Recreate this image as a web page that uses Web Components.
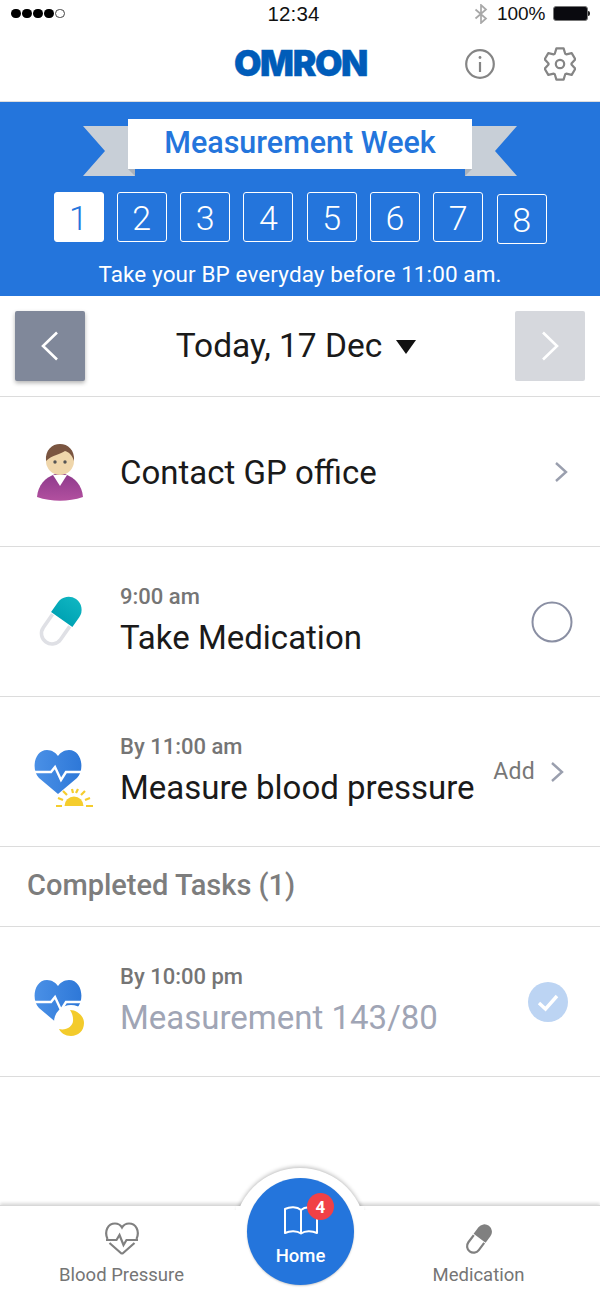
<!DOCTYPE html>
<html lang="en">
<head>
<meta charset="utf-8">
<title>Omron</title>
<style>
    html, body { margin: 0; padding: 0; background: #fff; }
    body {
        width: 600px;
        height: 1299px;
        display: flex;
        flex-direction: column;
        overflow: hidden;
        font-family: Roboto, "Liberation Sans", sans-serif;
    }
    .i { display: block; overflow: visible; }
</style>
</head>
<body>
<status-bar></status-bar>
<app-header></app-header>
<week-banner></week-banner>
<date-nav></date-nav>

<task-row align="single">
    <svg slot="icon" class="i" width="60" height="60" viewBox="0 0 60 60">
        <defs><linearGradient id="shirt" x1="0" y1="0" x2="0" y2="1"><stop offset="0" stop-color="#8e3a8c"/><stop offset="1" stop-color="#b2509f"/></linearGradient></defs>
        <path d="M7 55 C8 43 15 36 25 32 L35 32 C45 36 52 43 53 55 C38 60 22 60 7 55 Z" fill="url(#shirt)"/>
        <path d="M23 33 L37 33 L30 44 Z" fill="#fff"/>
        <circle cx="30" cy="19" r="14" fill="#efd6ab"/>
        <path d="M16 19 C15 8 22 2 30 2 C38 2 45 8 44 19 C42 13 39 10 35 9 C31 12 22 13 16 19 Z" fill="#7a5540"/>
        <circle cx="25" cy="20" r="1.7" fill="#555"/>
        <circle cx="35" cy="20" r="1.7" fill="#555"/>
    </svg>
    <span slot="title">Contact GP office</span>
    <svg slot="end" class="i" width="14" height="22" viewBox="0 0 14 22" style="margin-right:32px"><path d="M2 2 L12 11 L2 20" fill="none" stroke="#9a9fae" stroke-width="2.4"/></svg>
</task-row>

<task-row>
    <svg slot="icon" class="i" width="60" height="60" viewBox="0 0 60 60">
        <defs><linearGradient id="cap" x1="0" y1="0" x2="0" y2="1"><stop offset="0" stop-color="#0fb5c1"/><stop offset="1" stop-color="#00a3b4"/></linearGradient></defs>
        <g transform="rotate(35 30 30)">
            <path d="M19.5 28 V44 a10.5 10.5 0 0 0 21 0 V28" fill="#fff" stroke="#dfe0e5" stroke-width="3.6"/>
            <path d="M17 27 V15 a13 13 0 0 1 26 0 V27 Z" fill="url(#cap)"/>
        </g>
    </svg>
    <span slot="sub">9:00 am</span>
    <span slot="title">Take Medication</span>
    <svg slot="end" class="i" width="42" height="42" viewBox="0 0 42 42" style="margin-right:27px"><circle cx="21" cy="21" r="19.5" fill="none" stroke="#8a8fa3" stroke-width="2"/></svg>
</task-row>

<task-row>
    <svg slot="icon" class="i" width="60" height="60" viewBox="0 0 60 60">
        <defs><linearGradient id="h1" x1="0" y1="0" x2="1" y2="0"><stop offset="0" stop-color="#4a90e6"/><stop offset="1" stop-color="#2e78d8"/></linearGradient></defs>
        <path d="M28 52 L9 36 C1 28 4 8 17 8 C22 8 26 11 28 14 C30 11 34 8 39 8 C52 8 55 28 47 36 Z" fill="url(#h1)"/>
        <path d="M4 30 H21 L25 25 L31 38 L36 30 H52" fill="none" stroke="#fff" stroke-width="2.4"/>
        <circle cx="44" cy="62" r="16" fill="#fff"/>
        <path d="M34.500 64 a9.500 9.500 0 0 1 19 0 Z" fill="#f5cd2d"/>
        <path d="M26 64 H32 M56 64 H63 M28 56 L33 58 M55 58 L60 56 M33 49 L37 53 M51 53 L55 49 M42 47 L43 51 M46 51 L48 47" stroke="#f5cd2d" stroke-width="2.2" fill="none"/>
    </svg>
    <span slot="sub">By 11:00 am</span>
    <span slot="title">Measure blood pressure</span>
    <span slot="end" class="add" style="display:flex;align-items:center;gap:15px;margin-right:36px;margin-left:-4px;font-size:23px;color:#777;letter-spacing:.3px">Add<svg class="i" width="14" height="22" viewBox="0 0 14 22"><path d="M2 2 L12 11 L2 20" fill="none" stroke="#9a9fae" stroke-width="2.4"/></svg></span>
</task-row>

<section-title>Completed Tasks (1)</section-title>

<task-row done>
    <svg slot="icon" class="i" width="60" height="60" viewBox="0 0 60 60">
        <defs><linearGradient id="h2" x1="0" y1="0" x2="1" y2="0"><stop offset="0" stop-color="#4a90e6"/><stop offset="1" stop-color="#2e78d8"/></linearGradient></defs>
        <path d="M28 52 L9 36 C1 28 4 8 17 8 C22 8 26 11 28 14 C30 11 34 8 39 8 C52 8 55 28 47 36 Z" fill="url(#h2)"/>
        <path d="M4 30 H21 L25 25 L31 38 L36 30 H52" fill="none" stroke="#fff" stroke-width="2.4"/>
        <circle cx="41" cy="50" r="17" fill="#fff"/>
        <path d="M40 38 C47 38 54 44 54 51 C54 59 48 64 41 64 C35 64 31 61 29 57 C36 59 44 54 43 47 C43 44 42 41 40 38 Z" fill="#f3cb2b"/>
    </svg>
    <span slot="sub">By 10:00 pm</span>
    <span slot="title">Measurement 143/80</span>
    <svg slot="end" class="i" width="40" height="40" viewBox="0 0 40 40" style="margin-right:32px"><circle cx="20" cy="20" r="20" fill="#bcd4f3"/><path d="M11 21 L17.500 27 L29 14" fill="none" stroke="#fff" stroke-width="3.4"/></svg>
</task-row>

<tab-bar badge="4"></tab-bar>

<script>
const status_bar = document.createElement('template');
status_bar.innerHTML = `
    <style>
        :host{display:flex;align-items:center;height:27px;padding:0 10px 0 11px;margin-bottom:0;font-family:"Liberation Sans",sans-serif;color:#111;position:relative}
        .dots{display:flex;gap:1.5px;width:200px}
        .dots b{width:9.5px;height:9.5px;border-radius:50%;background:#000;box-sizing:border-box}
        .dots b.off{background:#fff;border:1px solid #444}
        .time{flex:1;text-align:center;font-size:20.5px;letter-spacing:.1px;margin-left:-14px}
        .right{width:200px;display:flex;justify-content:flex-end;align-items:center;font-size:19px;gap:9px}
        .batt{display:flex;align-items:center}
        .batt i{display:block;width:35px;height:15px;box-sizing:border-box;background:#0a0a0f;border:1px solid #777;border-radius:3px}
        .batt u{display:block;width:2.500px;height:5px;background:#222;border-radius:0 2px 2px 0}
    </style>
    <div class="dots"><b></b><b></b><b></b><b></b><b class="off"></b></div>
    <div class="time">12:34</div>
    <div class="right">
        <svg width="14" height="20" viewBox="0 0 14 20"><path d="M1.500 5.500 L12 14.500 L7 19 V1 L12 5.500 L1.500 14.500" fill="none" stroke="#a8a8a8" stroke-width="1.700"/></svg>
        <span>100%</span>
        <div class="batt" style="margin-left:-2px"><i></i><u></u></div>
    </div>
`;
class StatusBar extends HTMLElement {
    constructor() {
        super();
        this.attachShadow({ mode: 'open' });
        this.shadowRoot.appendChild(status_bar.content.cloneNode(true));
    }
}

// cog outline: six flat teeth, one of them straight up
function gearPath(cx, cy, ro, ri) {
    let d = '';
    for (let n = 0; n < 6; n++) {
        const a = n * 60 - 90;
        [[ri, a - 27], [ro, a - 13], [ro, a + 13], [ri, a + 27]].forEach((p, k) => {
            const x = cx + p[0] * Math.cos(p[1] * Math.PI / 180);
            const y = cy + p[0] * Math.sin(p[1] * Math.PI / 180);
            d += (n == 0 && k == 0 ? 'M' : 'L') + x.toFixed(2) + ' ' + y.toFixed(2) + ' ';
        });
    }
    return d + 'Z';
}

const app_header = document.createElement('template');
app_header.innerHTML = `
    <style>
        :host{display:block;height:75px;border-bottom:1.5px solid #ddd;box-sizing:border-box;position:relative}
        .bar{display:grid;grid-template-columns:465px 30px 49px 32px;align-items:center;height:100%;padding-bottom:1px;box-sizing:border-box}
        .logo{justify-self:center;transform:translateX(68px);font:900 35.5px Inter,sans-serif;letter-spacing:-1.4px;color:#005cb9;-webkit-text-stroke:.4px #005cb9}
        svg{display:block;grid-row:1}
        .info{grid-column:2}
        .gear{grid-column:4}
    </style>
    <div class="bar">
        <div class="logo">OMRON</div>
        <svg class="info" width="30" height="30" viewBox="0 0 30 30" fill="none" stroke="#858585" stroke-width="2.200">
            <circle cx="15" cy="15" r="13.800"/>
            <path d="M15 13 V23"/>
            <circle cx="15" cy="8.500" r="1.400" fill="#858585" stroke="none"/>
        </svg>
        <svg class="gear" width="32" height="34" viewBox="0 0 32 34" fill="none" stroke="#858585" stroke-width="2.200" stroke-linejoin="round">
            <path id="cog"/>
            <circle cx="16" cy="17" r="4.200"/>
        </svg>
    </div>
`;
class AppHeader extends HTMLElement {
    constructor() {
        super();
        this.attachShadow({ mode: 'open' });
        this.shadowRoot.appendChild(app_header.content.cloneNode(true));
        this.shadowRoot.querySelector('#cog').setAttribute('d', gearPath(16, 17, 16, 11.5));
    }
}

const week_banner = document.createElement('template');
week_banner.innerHTML = `
    <style>
        :host{display:block;height:194px;background:#2475dc;color:#fff;padding-top:17px;box-sizing:border-box;position:relative}
        .ribbon{position:relative;width:344px;height:50px;margin:0 auto;background:#fff;color:#2475dc;display:flex;align-items:center;justify-content:center;font-size:30.5px;font-weight:500;padding-bottom:3px;box-sizing:border-box}
        .tail{position:absolute;top:7px}
        .tail.l{left:-45px}
        .tail.r{right:-45px;transform:scaleX(-1)}
        .weeks{display:flex;gap:13.300px;padding:23px 0 0 53.500px}
        .week{width:50px;height:50px;box-sizing:border-box;border:1.800px solid #fff;border-radius:3px;display:flex;align-items:center;justify-content:center;font-size:34px;font-weight:300;padding-top:2px}
        .week.on{background:#fff;color:#2475dc}
        .week.last{margin-top:2px}
        .tip{text-align:center;font-size:22.5px;margin-top:15px;line-height:30px;letter-spacing:.1px}
    </style>
    <div class="ribbon">
        <svg class="tail l" width="52" height="50" viewBox="0 0 52 50"><path d="M0 0 H45 V43 H52 V50 H0 L22 25 Z" fill="#c8cfd7"/><path d="M45 43 H52 V50 Z" fill="#aab2bc"/></svg>
        <svg class="tail r" width="52" height="50" viewBox="0 0 52 50"><path d="M0 0 H45 V43 H52 V50 H0 L22 25 Z" fill="#c8cfd7"/><path d="M45 43 H52 V50 Z" fill="#aab2bc"/></svg>
        Measurement Week
    </div>
    <div class="weeks"></div>
    <div class="tip">Take your BP everyday before 11:00 am.</div>
`;
class WeekBanner extends HTMLElement {
    constructor() {
        super();
        this.attachShadow({ mode: 'open' });
        this.shadowRoot.appendChild(week_banner.content.cloneNode(true));
        const weeks = this.shadowRoot.querySelector('.weeks');
        for (let n = 1; n <= 8; n++) {
            const el = document.createElement('div');
            el.className = 'week' + (n == 1 ? ' on' : '') + (n == 8 ? ' last' : '');
            el.textContent = n;
            weeks.appendChild(el);
        }
    }
}

const date_nav = document.createElement('template');
date_nav.innerHTML = `
    <style>
        :host{display:flex;align-items:center;justify-content:space-between;height:101px;padding:0 15px 1px;box-sizing:border-box;border-bottom:1.500px solid #dcdcdc}
        .btn{width:70px;height:70px;border-radius:2px;display:flex;align-items:center;justify-content:center}
        .prev{background:#80889a;box-shadow:0 2px 4px rgba(0,0,0,.3)}
        .next{background:#d6d8dd}
        .date{display:flex;align-items:center;gap:14px;font-size:33.5px;color:#1a1a1a;padding-right:8px}
        .tri{width:0;height:0;border-left:10.500px solid transparent;border-right:10.500px solid transparent;border-top:14px solid #111;margin-top:3px}
    </style>
    <div class="btn prev"><svg width="20" height="30" viewBox="0 0 20 30"><path d="M17 1.500 L3 15 L17 28.500" fill="none" stroke="#fff" stroke-width="2.600"/></svg></div>
    <div class="date"><span>Today, 17 Dec</span><i class="tri"></i></div>
    <div class="btn next"><svg width="20" height="30" viewBox="0 0 20 30"><path d="M3 1.500 L17 15 L3 28.500" fill="none" stroke="#fff" stroke-width="2.600"/></svg></div>
`;
class DateNav extends HTMLElement {
    constructor() {
        super();
        this.attachShadow({ mode: 'open' });
        this.shadowRoot.appendChild(date_nav.content.cloneNode(true));
    }
}

const task_row = document.createElement('template');
task_row.innerHTML = `
    <style>
        :host{display:flex;align-items:center;height:150px;box-sizing:border-box;border-bottom:1.500px solid #dcdcdc;padding-left:30px;color:#1a1a1a;flex:none}
        .icon{width:60px;height:60px;margin-right:30px;flex:none}
        .text{flex:1;min-width:0;display:flex;flex-direction:column}
        .sub{font-size:22px;font-weight:500;color:#757575;line-height:28px;margin-bottom:5px;margin-top:-1px}
        .title{font-size:33px;line-height:44px;white-space:nowrap}
        :host([align=single]) .title{margin-top:3px}
        :host([align=single]) .sub{display:none}
        :host([done]) .title{color:#a0a5b5}
    </style>
    <div class="icon"><slot name="icon"></slot></div>
    <div class="text">
        <div class="sub"><slot name="sub"></slot></div>
        <div class="title"><slot name="title"></slot></div>
    </div>
    <slot name="end"></slot>
`;
class TaskRow extends HTMLElement {
    constructor() {
        super();
        this.attachShadow({ mode: 'open' });
        this.shadowRoot.appendChild(task_row.content.cloneNode(true));
    }
}

const section_title = document.createElement('template');
section_title.innerHTML = `
    <style>
        :host{display:flex;align-items:center;height:80px;box-sizing:border-box;border-bottom:1.500px solid #dcdcdc;padding:0 0 3px 27px;font-size:29px;font-weight:500;color:#7d7d7d;flex:none}
    </style>
    <slot></slot>
`;
class SectionTitle extends HTMLElement {
    constructor() {
        super();
        this.attachShadow({ mode: 'open' });
        this.shadowRoot.appendChild(section_title.content.cloneNode(true));
    }
}

const tab_bar = document.createElement('template');
tab_bar.innerHTML = `
    <style>
        :host{display:grid;grid-template-columns:243px 114px 243px;height:94px;margin-top:auto;position:relative;background:#fff;border-top:1px solid #d8d8d8;box-shadow:0 -2px 3px rgba(0,0,0,.14);box-sizing:border-box;flex:none}
        .tab{display:flex;flex-direction:column;align-items:center;font-size:18.5px;color:#757575;padding-top:16px}
        .tab svg{display:block;height:34px;margin-bottom:8px}
        .tab span{line-height:22px}
        .halo{position:absolute;left:234px;top:-38px;width:132px;height:132px;border-radius:50%;background:#fff;clip-path:inset(-6px -6px 90px -6px);box-shadow:0 -1px 4px rgba(0,0,0,.28)}
        .cover{position:absolute;left:236px;top:0;width:128px;height:94px;background:#fff}
        .home{position:absolute;left:247px;top:-28px;width:107px;height:107px;border-radius:50%;background:#2475dc;color:#fff;display:flex;flex-direction:column;align-items:center;font-size:18.5px;font-weight:500;padding-top:28px;box-sizing:border-box;box-shadow:0 1px 2px rgba(0,0,0,.2)}
        .home svg{display:block;margin-bottom:9px;margin-left:0}
        .home span{line-height:24px}
        .badge{position:absolute;left:60px;top:15px;width:27px;height:27px;border-radius:50%;background:#f14146;color:#fff;font-size:17px;font-weight:700;display:flex;align-items:center;justify-content:center}
    </style>
    <div class="tab">
        <svg width="34" height="34" viewBox="0 0 34 34" fill="none" stroke="#808080" stroke-width="2.200">
            <path d="M17 32 L4.500 21 M17 32 L29.500 21 M2.500 17 C-1 9 3 1.500 10 1.500 C13 1.500 15.500 3 17 5.500 C18.500 3 21 1.500 24 1.500 C31 1.500 35 9 31.500 17"/>
            <path d="M1 18 H11.500 L14.500 13 L18.500 23 L21.500 18 H33"/>
        </svg>
        <span>Blood Pressure</span>
    </div>
    <div></div>
    <div class="tab">
        <svg width="34" height="34" viewBox="0 0 34 34">
            <g transform="rotate(37 17 17)">
                <path d="M10.500 17 V26 a6.500 6.500 0 0 0 13 0 V17" fill="none" stroke="#808080" stroke-width="2.200"/>
                <path d="M9.500 16 V8 a7.500 7.500 0 0 1 15 0 V16 Z" fill="#808080"/>
            </g>
        </svg>
        <span>Medication</span>
    </div>
    <div class="halo"></div>
    <div class="cover"></div>
    <div class="home">
        <svg width="34" height="29" viewBox="0 0 34 29" fill="none" stroke="#fff" stroke-width="2" stroke-linejoin="round">
            <path d="M1 3 C6 .5 13 .5 17 4 C21 .5 28 .5 33 3 V27 C28 24.500 21 24.500 17 27.500 C13 24.500 6 24.500 1 27 Z M17 4 V27.500"/>
        </svg>
        <span>Home</span>
        <div class="badge"></div>
    </div>
`;
class TabBar extends HTMLElement {
    constructor() {
        super();
        this.attachShadow({ mode: 'open' });
        this.shadowRoot.appendChild(tab_bar.content.cloneNode(true));
    }

    connectedCallback() {
        this.shadowRoot.querySelector('.badge').textContent = this.getAttribute('badge');
    }
}

window.customElements.define('status-bar', StatusBar);
window.customElements.define('app-header', AppHeader);
window.customElements.define('week-banner', WeekBanner);
window.customElements.define('date-nav', DateNav);
window.customElements.define('task-row', TaskRow);
window.customElements.define('section-title', SectionTitle);
window.customElements.define('tab-bar', TabBar);
</script>
</body>
</html>
